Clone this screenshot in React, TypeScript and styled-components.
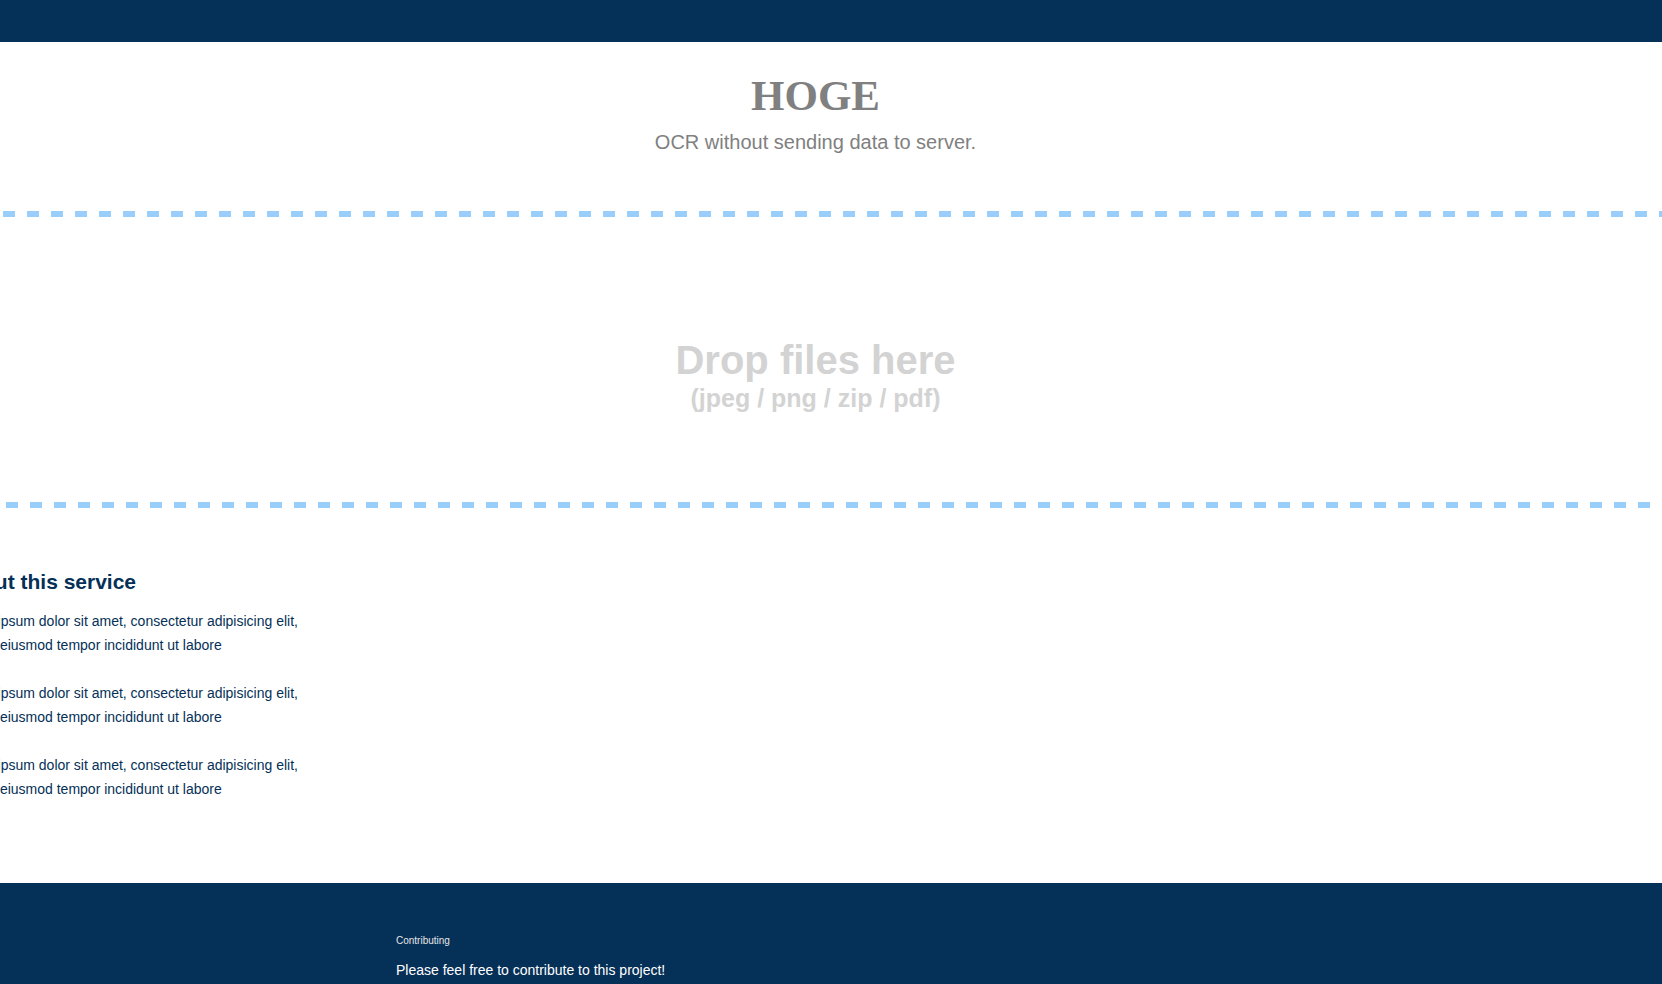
import React from "react";
import styled, { createGlobalStyle } from "styled-components";

const GlobalStyle = createGlobalStyle`
  html, body {
    margin: 0;
    padding: 0;
    background: #ffffff;
    overflow-x: hidden;
  }
  body {
    font-family: "Liberation Sans", Arial, sans-serif;
  }
  * { box-sizing: border-box; }
`;

const NAVY = "#053057";

const Page = styled.div`
  display: flex;
  flex-direction: column;
  width: 100%;
`;

const TopBar = styled.header`
  height: 42px;
  background: ${NAVY};
`;

const Hero = styled.section`
  display: flex;
  flex-direction: column;
  align-items: center;
  padding: 29px 31px 57px 0;
`;

const Title = styled.h1`
  margin: 0;
  font-family: "Liberation Serif", "Times New Roman", serif;
  font-weight: 700;
  font-size: 43px;
  line-height: 50px;
  color: #808080;
`;

const Subtitle = styled.p`
  margin: 9px 0 0;
  font-size: 20px;
  line-height: 24px;
  color: #808080;
`;

const DashedRule = styled.div<{ $start: number; $end: number }>`
  height: 6px;
  margin-left: ${(p) => p.$start}px;
  margin-right: ${(p) => p.$end}px;
  background-image: repeating-linear-gradient(
    90deg,
    #9acefa 0 12px,
    transparent 12px 24px
  );
`;

const DropArea = styled.section`
  display: flex;
  flex-direction: column;
  align-items: center;
  padding: 120px 31px 89px 0;
  color: #d3d3d3;
  font-weight: 700;
`;

const DropTitle = styled.div`
  font-size: 40px;
  line-height: 46px;
`;

const DropHint = styled.div`
  font-size: 25px;
  line-height: 30px;
`;

const About = styled.section`
  width: 350px;
  margin-left: -46px;
  padding: 62px 0 82px;
  color: ${NAVY};
`;

const AboutHeading = styled.h2`
  margin: 0 0 15px;
  font-size: 21px;
  line-height: 24px;
  font-weight: 700;
`;

const AboutText = styled.p`
  margin: 0 0 24px;
  font-size: 14px;
  line-height: 24px;
  &:last-child { margin-bottom: 0; }
`;

const Footer = styled.footer`
  background: ${NAVY};
  padding: 52px 0 60px 396px;
  display: flex;
  flex-direction: column;
`;

const FooterLabel = styled.div`
  font-size: 10px;
  line-height: 12px;
  color: #e6e6e6;
`;

const FooterText = styled.p`
  margin: 13px 0 0;
  font-size: 14px;
  line-height: 20px;
  color: #ffffff;
`;

const lorem =
  "Lorem ipsum dolor sit amet, consectetur adipisicing elit, sed do eiusmod tempor incididunt ut labore";

export default function App() {
  return (
    <>
      <GlobalStyle />
      <Page>
        <TopBar />
        <Hero>
          <Title>HOGE</Title>
          <Subtitle>OCR without sending data to server.</Subtitle>
        </Hero>
        <DashedRule $start={3} $end={0} />
        <DropArea>
          <DropTitle>Drop files here</DropTitle>
          <DropHint>(jpeg / png / zip / pdf)</DropHint>
        </DropArea>
        <DashedRule $start={6} $end={12} />
        <About>
          <AboutHeading>About this service</AboutHeading>
          <AboutText>{lorem}</AboutText>
          <AboutText>{lorem}</AboutText>
          <AboutText>{lorem}</AboutText>
        </About>
        <Footer>
          <FooterLabel>Contributing</FooterLabel>
          <FooterText>Please feel free to contribute to this project!</FooterText>
        </Footer>
      </Page>
    </>
  );
}
